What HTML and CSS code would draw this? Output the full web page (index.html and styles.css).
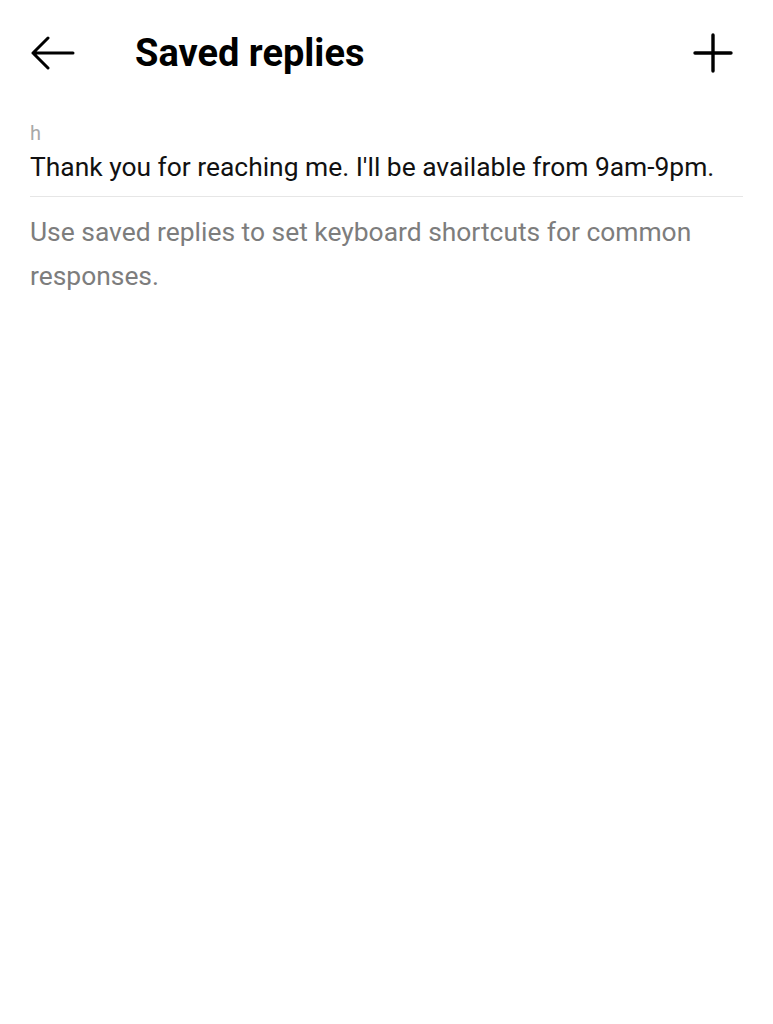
FILE: index.html
```html
<!DOCTYPE html>
<html>
<head>
<meta charset="utf-8">
<link rel="stylesheet" href="styles.css">
</head>
<body>
<div class="page">
  <header class="topbar">
    <div class="back">
      <svg width="44" height="34" viewBox="0 0 44 34"><path d="M2 17H42M17 2L2 17L17 32" fill="none" stroke="#000" stroke-width="3" stroke-linecap="round" stroke-linejoin="round"/></svg>
    </div>
    <h1 class="title">Saved replies</h1>
    <div class="add">
      <svg width="40" height="40" viewBox="0 0 40 40"><path d="M20 2V38M2 20H38" fill="none" stroke="#000" stroke-width="3.4" stroke-linecap="round"/></svg>
    </div>
  </header>
  <div class="list">
    <div class="item">
      <div class="shortcut">h</div>
      <div class="message">Thank you for reaching me. I'll be available from 9am-9pm.</div>
    </div>
    <p class="hint">Use saved replies to set keyboard shortcuts for common responses.</p>
  </div>
</div>
</body>
</html>
```
FILE: styles.css
```css
html, body { margin: 0; padding: 0; background: #fff; }
body { font-family: Roboto, "Noto Sans", sans-serif; color: #000; }
.page { width: 773px; }
.topbar { display: flex; align-items: center; height: 106px; padding: 0 40px 0 31px; box-sizing: border-box; }
.back { width: 44px; height: 34px; display: flex; }
.title { margin: 0 0 0 60px; font-size: 38px; font-weight: 700; flex: 1; letter-spacing: 0; }
.add { width: 40px; height: 40px; display: flex; }
.list { padding: 0 30px; }
.item { border-bottom: 1px solid #e6e6e6; padding-bottom: 8px; }
.shortcut { font-size: 20px; color: #a8a8a8; line-height: 26px; margin-top: 14px; }
.message { font-size: 26.4px; line-height: 42px; color: #111; }
.hint { margin: 13px 0 0; font-size: 26.4px; line-height: 44px; color: #7d7d7d; }
```
